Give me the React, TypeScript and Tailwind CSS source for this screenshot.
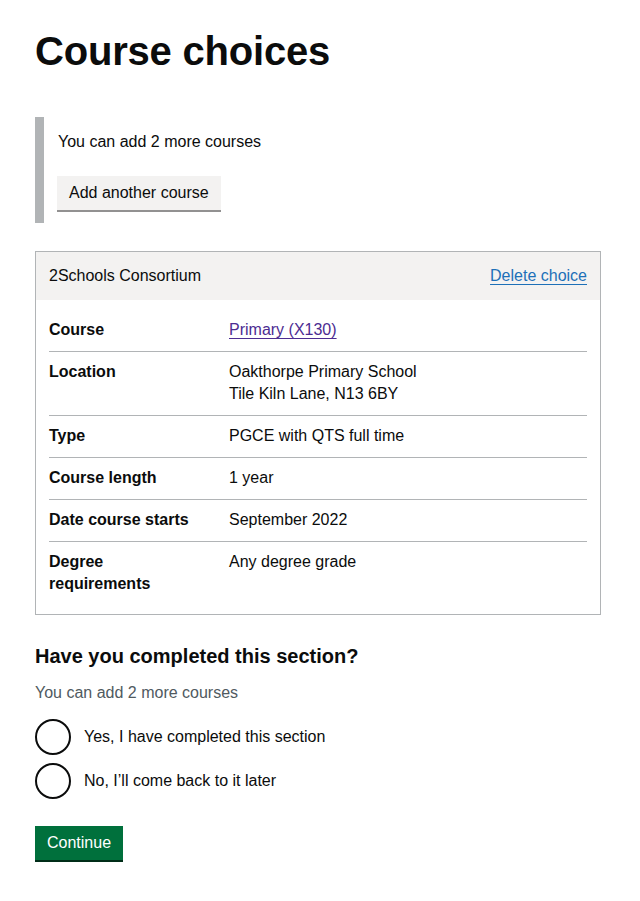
import React from "react";

const rows: { key: string[]; value: React.ReactNode }[] = [
  {
    key: ["Course"],
    value: (
      <a href="#" className="text-[#4c2c92] underline decoration-1 underline-offset-[3px]">
        Primary (X130)
      </a>
    ),
  },
  {
    key: ["Location"],
    value: (
      <>
        <div>Oakthorpe Primary School</div>
        <div>Tile Kiln Lane, N13 6BY</div>
      </>
    ),
  },
  { key: ["Type"], value: "PGCE with QTS full time" },
  { key: ["Course length"], value: "1 year" },
  { key: ["Date course starts"], value: "September 2022" },
  { key: ["Degree", "requirements"], value: "Any degree grade" },
];

function Radio({ label }: { label: string }) {
  return (
    <label className="flex items-center gap-[13px] h-[36px]">
      <span className="w-[36px] h-[36px] rounded-full border-2 border-[#0b0c0c] bg-white shrink-0" />
      <span className="text-[16px] leading-[22px]">{label}</span>
    </label>
  );
}

export default function App() {
  return (
    <div className="min-h-[901px] bg-white text-[#0b0c0c] font-['Liberation_Sans',Arial,sans-serif] pl-[35px] pr-[39px] pt-[27px] pb-[40px] w-[640px]">
      <h1 className="text-[40px] leading-[48px] font-bold tracking-[-0.2px]">Course choices</h1>

      <div className="mt-[42px] border-l-[9px] border-[#b1b4b6] pl-[14px] pt-[14px] pb-[11px]">
        <p className="text-[16px] leading-[22px]">You can add 2 more courses</p>
        <button className="mt-[23px] -ml-px bg-[#f3f2f1] shadow-[0_2px_0_#929191] h-[34px] mb-[2px] px-[12px] text-[16px] leading-[22px] text-[#0b0c0c]">
          Add another course
        </button>
      </div>

      <div className="mt-[28px] border border-[#b1b4b6]">
        <div className="bg-[#f3f2f1] flex justify-between items-center px-[13px] py-[13px] text-[16px] leading-[22px]">
          <span>2Schools Consortium</span>
          <a href="#" className="text-[#1d70b8] underline decoration-1 underline-offset-[3px]">
            Delete choice
          </a>
        </div>
        <div className="px-[13px] pt-[10px] pb-[9px]">
          {rows.map((r, i) => (
            <div
              key={i}
              className={`flex pt-[9px] pb-[10px] text-[16px] leading-[22px] ${
                i < rows.length - 1 ? "border-b border-[#b1b4b6]" : ""
              }`}
            >
              <div className="w-[180px] shrink-0 font-bold">
                {r.key.map((k, j) => (
                  <div key={j}>{k}</div>
                ))}
              </div>
              <div className="flex-1">{r.value}</div>
            </div>
          ))}
        </div>
      </div>

      <h2 className="mt-[29px] text-[20px] leading-[25px] font-bold">Have you completed this section?</h2>
      <p className="mt-[13px] text-[16px] leading-[22px] text-[#505a5f]">You can add 2 more courses</p>
      <div className="mt-[15px] flex flex-col gap-[8px]">
        <Radio label="Yes, I have completed this section" />
        <Radio label="No, I’ll come back to it later" />
      </div>

      <button className="mt-[27px] bg-[#00703c] shadow-[0_2px_0_#002d18] h-[34px] px-[12px] text-white text-[16px] leading-[22px]">
        Continue
      </button>
    </div>
  );
}
